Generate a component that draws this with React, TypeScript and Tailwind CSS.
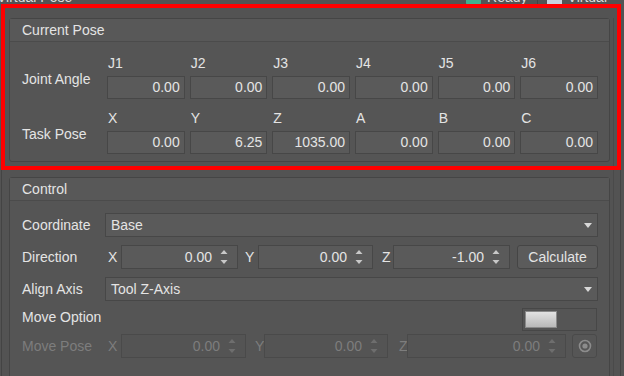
import React from "react";

const font = "font-['Liberation_Sans',Arial,sans-serif]";

const jointRow = [
  { label: "J1", value: "0.00" },
  { label: "J2", value: "0.00" },
  { label: "J3", value: "0.00" },
  { label: "J4", value: "0.00" },
  { label: "J5", value: "0.00" },
  { label: "J6", value: "0.00" },
];

const taskRow = [
  { label: "X", value: "0.00" },
  { label: "Y", value: "6.25" },
  { label: "Z", value: "1035.00" },
  { label: "A", value: "0.00" },
  { label: "B", value: "0.00" },
  { label: "C", value: "0.00" },
];

function PoseRow({ title, items }: { title: string; items: { label: string; value: string }[] }) {
  return (
    <div className="flex">
      <div className="flex w-[85px] shrink-0 items-end pb-[9px]">
        <span>{title}</span>
      </div>
      <div className="flex flex-1 gap-[5px]">
        {items.map((it) => (
          <div key={it.label} className="flex flex-1 flex-col">
            <span className="h-[20px] pl-px leading-[15px]">{it.label}</span>
            <div className="flex h-[23px] items-center justify-end border border-[#474747] bg-[#5a5a5a] pr-[4px]">
              {it.value}
            </div>
          </div>
        ))}
      </div>
    </div>
  );
}

function Arrows({ disabled }: { disabled?: boolean }) {
  const c = disabled ? "#6e6e6e" : "#c8c8c8";
  return (
    <svg width="10" height="16" viewBox="0 0 10 16" className="shrink-0">
      <path d="M5 1 L8.5 5 L1.5 5 Z" fill={c} />
      <path d="M5 15 L8.5 11 L1.5 11 Z" fill={c} />
    </svg>
  );
}

function Spin({ value, w, disabled }: { value: string; w: string; disabled?: boolean }) {
  return (
    <div
      className={`flex h-full shrink-0 items-center border ${w} ${
        disabled ? "border-[#4a4a4a] bg-[#545454] text-[#7d7d7d]" : "border-[#474747] bg-[#5a5a5a]"
      }`}
    >
      <span className="flex-1 pr-[7px] text-right">{value}</span>
      <div className="w-[18px] pr-[4px]">
        <Arrows disabled={disabled} />
      </div>
    </div>
  );
}

function Combo({ value }: { value: string }) {
  return (
    <div className="flex h-[24px] flex-1 items-center border border-[#474747] bg-[#5a5a5a] pl-[5px] pr-[5px]">
      <span className="flex-1">{value}</span>
      <svg width="8" height="5" viewBox="0 0 8 5">
        <path d="M0 0 L8 0 L4 5 Z" fill="#d8d8d8" />
      </svg>
    </div>
  );
}

function Group({ title, children }: { title: string; children: React.ReactNode }) {
  return (
    <section className="rounded-[3px] border border-[#454545] bg-[#555555]">
      <div className="flex h-[23px] items-center border-b border-[#4b4b4b] bg-[#585858] pl-[12px]">
        {title}
      </div>
      {children}
    </section>
  );
}

export default function App() {
  return (
    <div className={`relative h-[376px] w-[624px] overflow-hidden bg-[#535353] text-[14px] text-[#e4e4e4] ${font}`}>
      {/* title bar, mostly scrolled out of view */}
      <div className="-mt-[11px] flex h-[16px] items-end text-[#dedede]">
        <span className="-ml-[3px] leading-[15px]">Virtual Pose</span>
        <div className="ml-auto flex items-end gap-[6px] pr-[17px] leading-[15px]">
          <span className="h-[14px] w-[15px] rounded-[2px] bg-[#3fb08f]" />
          <span>Ready</span>
          <span className="mx-[3px] h-[16px] w-px bg-[#444]" />
          <span className="h-[14px] w-[15px] bg-[#c9d3e0]" />
          <span>Virtual</span>
        </div>
      </div>

      <div className="ml-px mt-[1px] h-[400px] w-[620px] border-x border-t border-[#444444] pl-[7px] pr-[6px] pt-[11px]">
        <div className="border-r border-[#4a4a4a] pr-[3px]">
          <Group title="Current Pose">
            <div className="flex flex-col gap-[12px] pb-[7px] pl-[12px] pr-[11px] pt-[14px]">
              <PoseRow title="Joint Angle" items={jointRow} />
              <PoseRow title="Task Pose" items={taskRow} />
            </div>
          </Group>

          <div className="mt-[15px]">
            <Group title="Control">
              <div className="flex flex-col pb-[20px] pl-[12px] pr-[11px] pt-[12px]">
                <div className="flex h-[24px] items-center">
                  <span className="w-[83px]">Coordinate</span>
                  <Combo value="Base" />
                </div>

                <div className="mt-[8px] flex h-[24px] items-center">
                  <span className="w-[83px]">Direction</span>
                  <span className="w-[16px] pl-[3px]">X</span>
                  <Spin value="0.00" w="w-[117px]" />
                  <span className="w-[20px] pl-[7px]">Y</span>
                  <Spin value="0.00" w="w-[115px]" />
                  <span className="w-[20px] pl-[9px]">Z</span>
                  <Spin value="-1.00" w="w-[117px]" />
                  <button className="ml-[7px] h-full flex-1 rounded-[3px] border border-[#454545] bg-[#5b5b5b] text-[#e4e4e4]">
                    Calculate
                  </button>
                </div>

                <div className="mt-[8px] flex h-[24px] items-center">
                  <span className="w-[83px]">Align Axis</span>
                  <Combo value="Tool Z-Axis" />
                </div>

                <div className="mt-[7px] flex h-[23px] items-center">
                  <span className="mb-[5px] flex-1">Move Option</span>
                  <div className="mr-px flex h-[23px] w-[75px] items-center border border-[#474747] bg-[#555555] pl-[2px]">
                    <div className="h-[17px] w-[32px] border border-[#8a8a8a] bg-gradient-to-b from-[#e2e2e2] to-[#b9b9b9]" />
                  </div>
                </div>

                <div className="mt-[3px] flex h-[24px] items-center text-[#7d7d7d]">
                  <span className="w-[83px]">Move Pose</span>
                  <span className="w-[16px] pl-[3px]">X</span>
                  <Spin value="0.00" w="w-[125px]" disabled />
                  <span className="w-[18px] pl-[9px]">Y</span>
                  <Spin value="0.00" w="w-[124px]" disabled />
                  <span className="w-[19px] pl-[11px]">Z</span>
                  <Spin value="0.00" w="w-[159px]" disabled />
                  <button className="ml-[6px] flex h-full w-[25px] items-center justify-center rounded-[3px] border border-[#4a4a4a] bg-[#565656]">
                    <svg width="14" height="14" viewBox="0 0 14 14">
                      <circle cx="7" cy="7" r="5.5" fill="none" stroke="#8c8c8c" strokeWidth="1.6" />
                      <circle cx="7" cy="7" r="2.6" fill="#8c8c8c" />
                    </svg>
                  </button>
                </div>
              </div>
            </Group>
          </div>
        </div>
      </div>

      {/* highlight frame drawn over the pose panel */}
      <div className="pointer-events-none absolute left-[1px] top-[4px] h-[166px] w-[620px] border-[4px] border-[#ff0000]" />
    </div>
  );
}
